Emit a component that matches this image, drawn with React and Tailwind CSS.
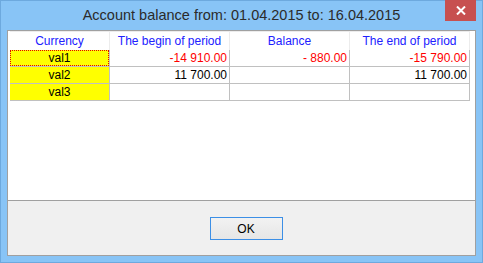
export default function App() {
  const rows = [
    { cur: "val1", begin: "-14 910.00", bal: "- 880.00", end: "-15 790.00", red: true, focus: true },
    { cur: "val2", begin: "11 700.00", bal: "", end: "11 700.00" },
    { cur: "val3", begin: "", bal: "", end: "" },
  ];
  const heads = ["Currency", "The begin of period", "Balance", "The end of period"];
  const widths = ["w-[100px]", "w-[120px]", "w-[120px]", "w-[120px]"];

  return (
    <div className="w-[483px] h-[263px] bg-[#88c4f6] border border-[#6da9de] flex flex-col font-['Liberation_Sans',Arial,sans-serif]">
      {/* title bar */}
      <div className="relative h-[29px] flex items-center justify-center">
        <span className="text-[14.5px] text-[#2b2b2b] mt-[1px] font-['Liberation_Sans',Arial,sans-serif]">
          Account balance from: 01.04.2015 to: 16.04.2015
        </span>
        <div className="absolute right-[6px] top-[-1px] w-[31px] h-[21px] bg-[#c75050] flex items-center justify-center">
          <svg width="10" height="9" viewBox="0 0 10 9">
            <path d="M1 0.5 L9 8.5 M9 0.5 L1 8.5" stroke="#fff" strokeWidth="2" />
          </svg>
        </div>
      </div>

      {/* client */}
      <div className="ml-[6px] w-[469px] h-[226px] border border-[#a0a0a0] flex flex-col">
        <div className="h-[170px] bg-white border-b border-[#a0a0a0] pl-[2px] flex flex-col">
          <div className="flex h-[19px] text-[12px] text-[#2020ff]">
            {heads.map((h, i) => (
              <div
                key={h}
                className={`${widths[i]} border-r border-t border-[#ececec] flex items-center justify-center`}
              >
                {h}
              </div>
            ))}
          </div>
          {rows.map((r) => (
            <div key={r.cur} className="flex h-[17px] text-[12px] leading-[16px]">
              <div className="w-[100px] border-r border-b border-[#c0c0c0] bg-[#ffff00] relative flex justify-center text-black">
                {r.focus && (
                  <div className="absolute left-0 top-0 right-0 bottom-0 border border-dotted border-[#e00000]" />
                )}
                {r.cur}
              </div>
              {[r.begin, r.bal, r.end].map((v, j) => (
                <div
                  key={j}
                  className={`w-[120px] border-r border-b border-[#c0c0c0] text-right pr-[2px] ${r.red ? "text-[#ff0000]" : "text-black"}`}
                >
                  {v}
                </div>
              ))}
            </div>
          ))}
        </div>
        <div className="flex-1 bg-[#f0f0f0] flex items-center justify-center">
          <button className="w-[73px] h-[23px] ml-[9px] mt-[1px] border border-[#3c8fe6] bg-gradient-to-b from-[#f2f2f2] to-[#e6e6e6] text-[12px] text-black font-['Liberation_Sans',Arial,sans-serif]">
            OK
          </button>
        </div>
      </div>
    </div>
  );
}
